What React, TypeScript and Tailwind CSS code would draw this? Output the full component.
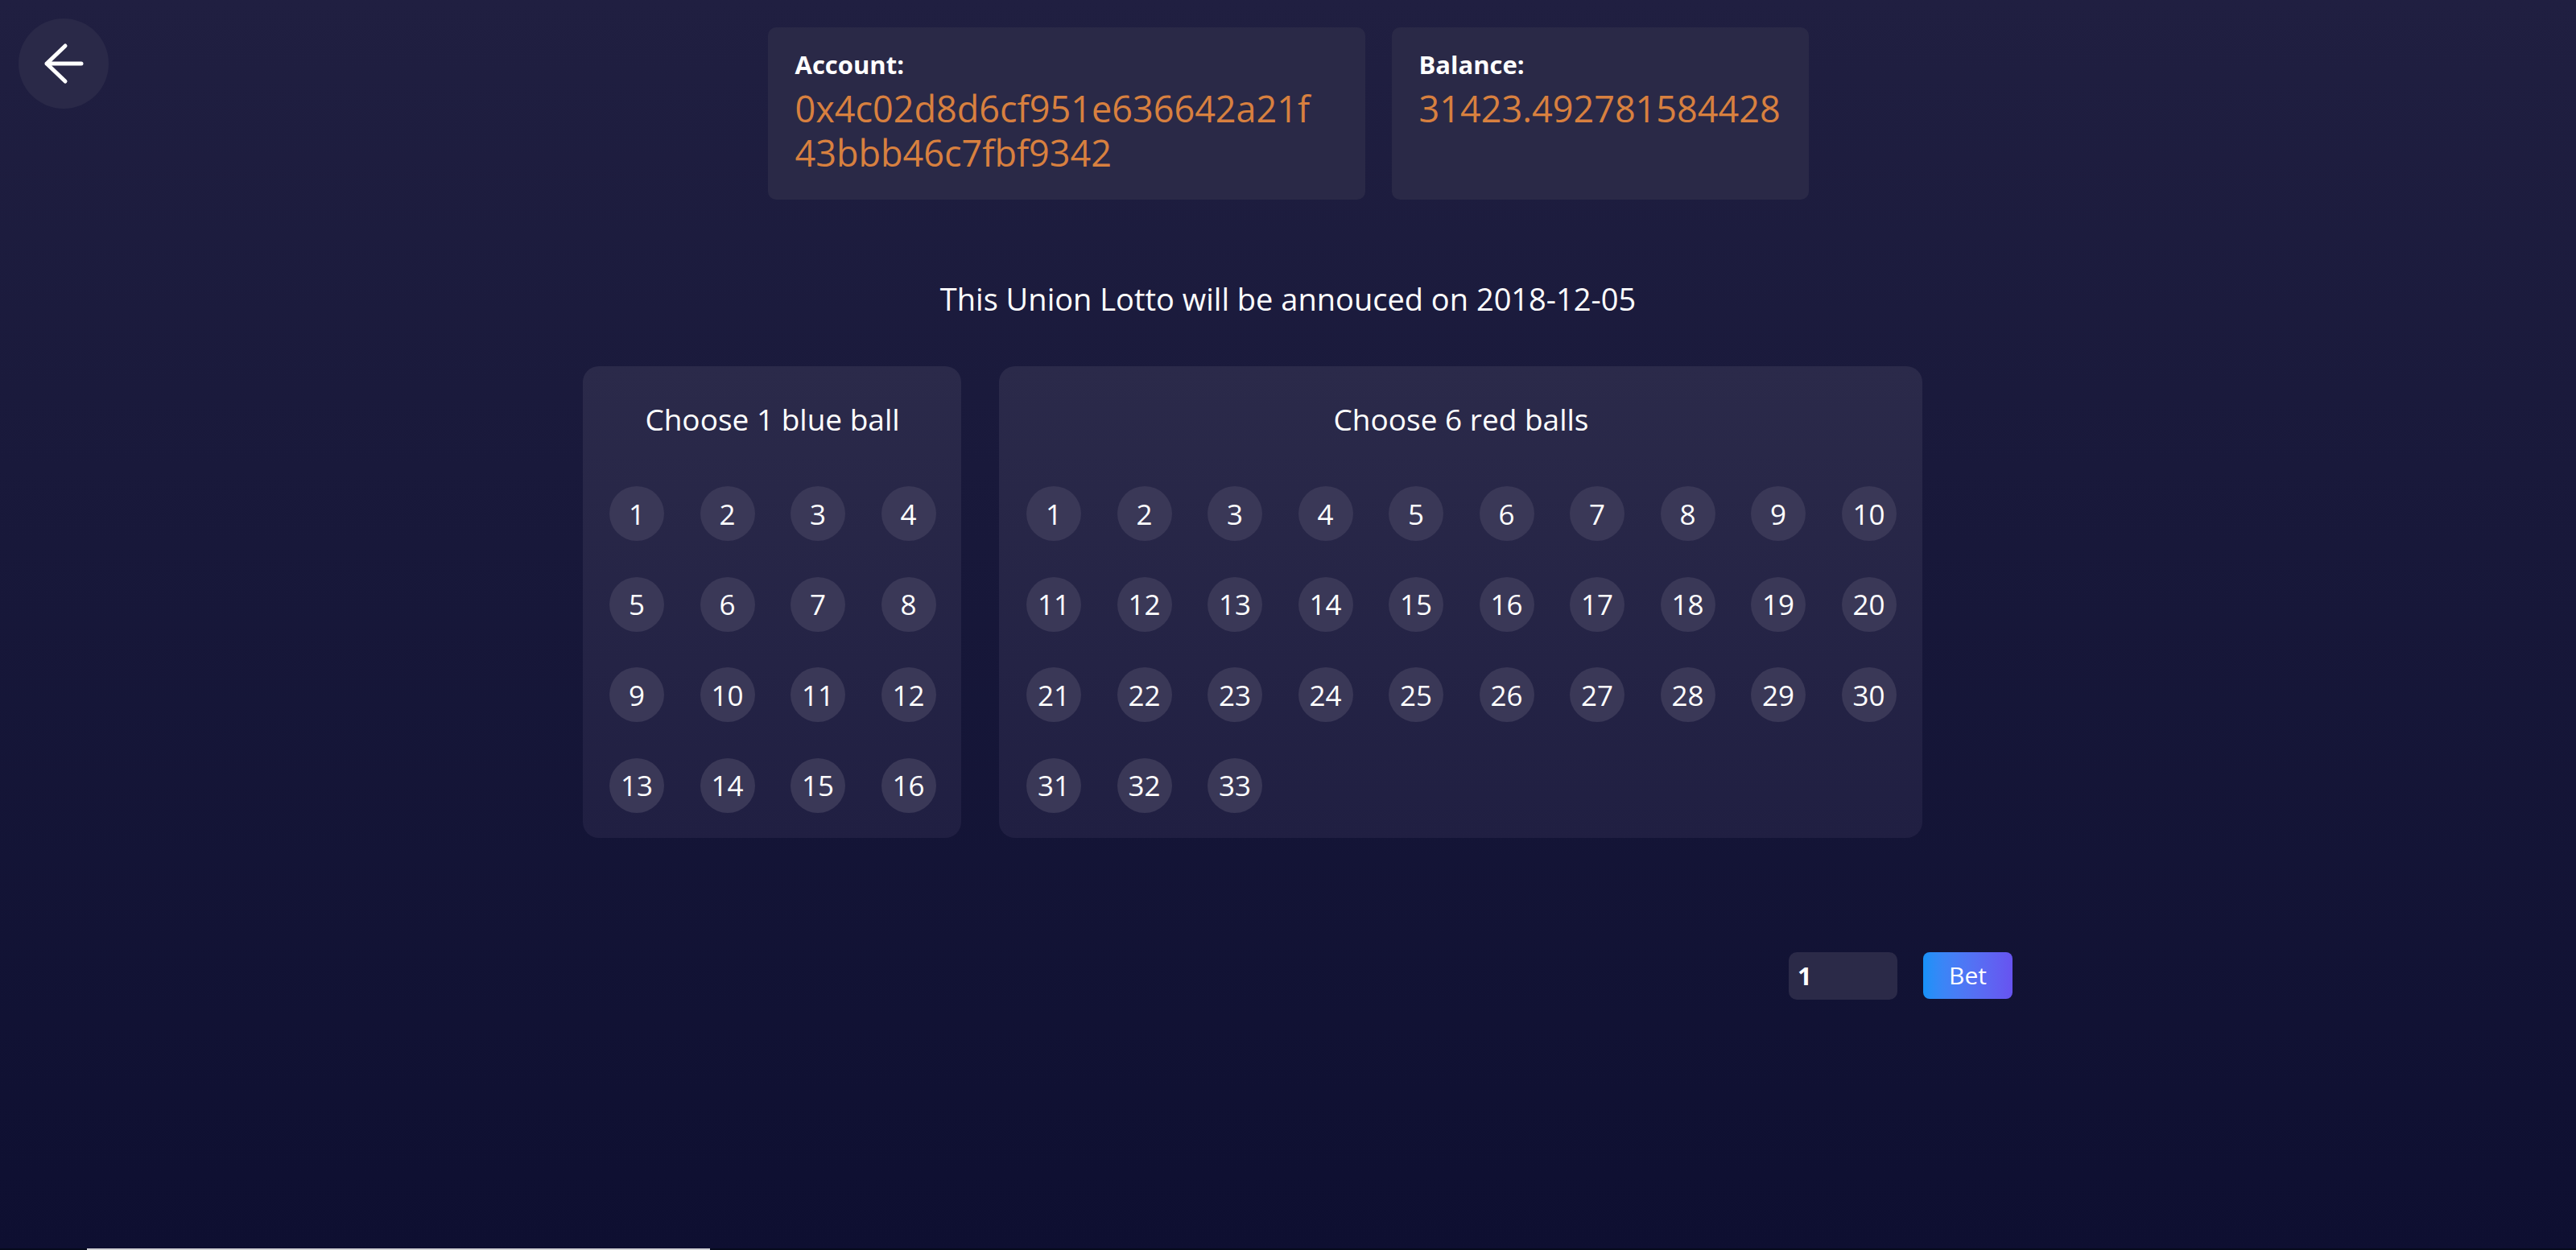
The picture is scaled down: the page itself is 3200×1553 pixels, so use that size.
import { useState } from 'react';

const BLUE_BALLS = Array.from({ length: 16 }, (_, i) => i + 1);
const RED_BALLS = Array.from({ length: 33 }, (_, i) => i + 1);

const ACCOUNT = '0x4c02d8d6cf951e636642a21f43bbb46c7fbf9342';

function BackButton() {
  return (
    <button className="absolute left-[23px] top-[23px] flex h-[112px] w-[112px] items-center justify-center rounded-full bg-[#2a2948]">
      <svg width="112" height="112" viewBox="0 0 112 112" fill="none">
        <path
          d="M78 56H35M58 34L35 56l23 22"
          stroke="white"
          strokeWidth="5"
          strokeLinecap="round"
          strokeLinejoin="round"
        />
      </svg>
    </button>
  );
}

function Ball({ n }: { n: number }) {
  return (
    <div className="flex h-[68px] w-[68px] items-center justify-center rounded-full bg-[#3a3857] text-[35px] leading-none text-white">
      {n}
    </div>
  );
}

export default function App() {
  const [amount, setAmount] = useState('1');

  return (
    <div className="relative min-h-screen w-full bg-linear-to-b from-[#201f41] to-[#0e0f31] font-['Open_Sans',sans-serif] text-white">
      <BackButton />

      <div className="flex justify-center gap-[33px] pt-[34px]">
        <div className="w-[742px] h-[214px] rounded-[10px] bg-[#2a2947] px-[34px] pt-[22px]">
          <p className="text-[31px] font-bold leading-[48px]">Account:</p>
          <p className="mt-[3px] text-[45px] leading-[55px] text-[#d8803f]">
            <span className="block">{ACCOUNT.slice(0, 26)}</span>
            <span className="block">{ACCOUNT.slice(26)}</span>
          </p>
        </div>
        <div className="w-[518px] h-[214px] rounded-[10px] bg-[#2a2947] px-[34px] pt-[22px]">
          <p className="text-[31px] font-bold leading-[48px]">Balance:</p>
          <p className="mt-[3px] text-[45px] leading-[55px] text-[#d8803f]">31423.492781584428</p>
        </div>
      </div>

      <p className="mt-[96px] text-center text-[38px] leading-[54px]">
        This Union Lotto will be annouced on 2018-12-05
      </p>

      <div className="mx-auto mt-[57px] flex w-[1752px] gap-[47px]">
        <section className="w-[470px] rounded-[20px] bg-linear-to-b from-[#2b2a4a] to-[#201f42] pl-[33px] pr-[32px] pt-[39px] pb-[31px]">
          <h2 className="text-center text-[37px] font-normal leading-[54px]">Choose 1 blue ball</h2>
          <div className="mt-[56px] grid grid-cols-[repeat(4,68px)] gap-x-[44.5px] gap-y-[44.5px]">
            {BLUE_BALLS.map((n) => (
              <Ball key={n} n={n} />
            ))}
          </div>
        </section>

        <section className="w-[1147px] rounded-[20px] bg-linear-to-b from-[#2b2a4a] to-[#201f42] pl-[34px] pr-[33px] pt-[39px] pb-[31px]">
          <h2 className="text-center text-[37px] font-normal leading-[54px]">Choose 6 red balls</h2>
          <div className="mt-[56px] grid grid-cols-[repeat(10,68px)] gap-x-[44.5px] gap-y-[44.5px]">
            {RED_BALLS.map((n) => (
              <Ball key={n} n={n} />
            ))}
          </div>
        </section>
      </div>

      <div className="mt-[142px] flex pl-[2222px] gap-[32px]">
        <input
          value={amount}
          onChange={(e) => setAmount(e.target.value)}
          className="h-[59px] w-[135px] rounded-[10px] bg-[#2b2a48] px-[11px] text-[31px] font-bold text-white outline-none"
        />
        <button className="h-[58px] w-[111px] rounded-[8px] bg-linear-to-r from-[#1592f8] to-[#6753f0] text-[30px] leading-none text-white">
          Bet
        </button>
      </div>

      <div className="absolute bottom-0 left-0 h-[2px] w-full bg-[#060a1c]">
        <div className="ml-[108px] h-full w-[774px] bg-[#d0d0d4]" />
      </div>
    </div>
  );
}
